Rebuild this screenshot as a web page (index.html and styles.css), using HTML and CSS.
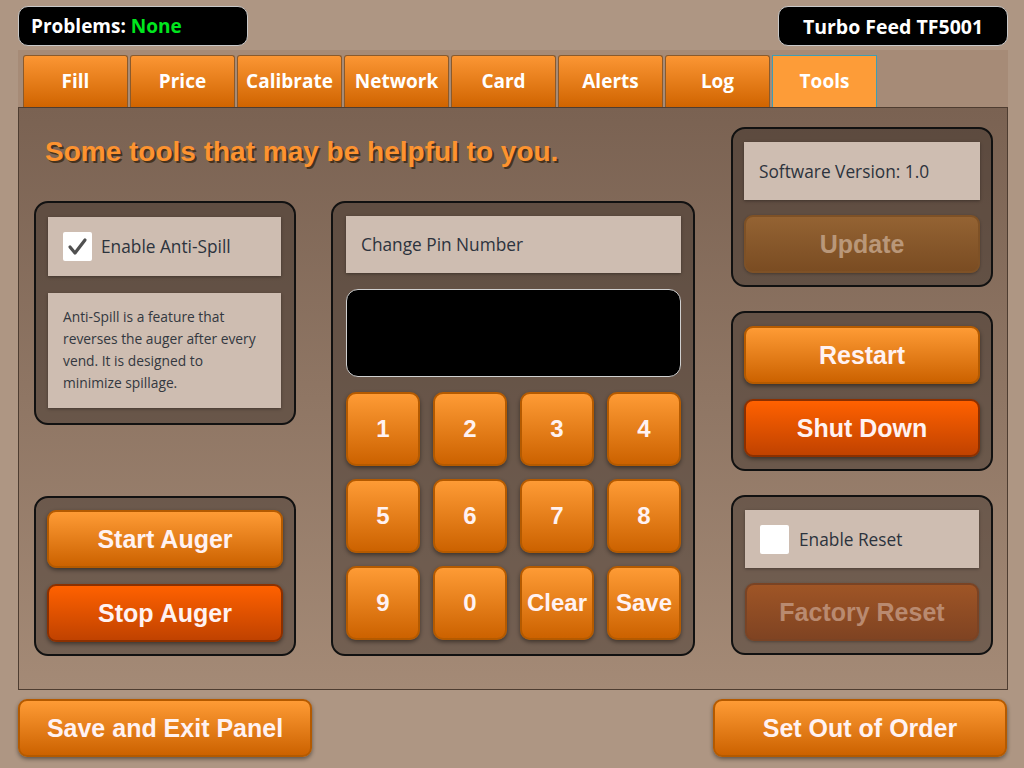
FILE: index.html
```html
<!DOCTYPE html>
<html>
<head>
<meta charset="utf-8">
<link rel="stylesheet" href="styles.css">
</head>
<body>
<div class="topbar">
  <div class="badge">Problems: <span class="ok">None</span></div>
  <div class="badge model">Turbo Feed TF5001</div>
</div>
<div class="tabstrip">
  <div class="tab">Fill</div>
  <div class="tab">Price</div>
  <div class="tab">Calibrate</div>
  <div class="tab">Network</div>
  <div class="tab">Card</div>
  <div class="tab">Alerts</div>
  <div class="tab">Log</div>
  <div class="tab active">Tools</div>
</div>
<div class="content">
  <div class="main">
    <h1 class="heading">Some tools that may be helpful to you.</h1>
    <div class="cols">
      <div class="leftcol">
        <div class="panel antispill">
          <div class="label check-row">
            <span class="checkbox"><svg width="29" height="29" viewBox="0 0 29 29"><path d="M7 15 L12 21 L22 8" fill="none" stroke="#505050" stroke-width="3.2" stroke-linecap="round" stroke-linejoin="round"/></svg></span>
            <span>Enable Anti-Spill</span>
          </div>
          <div class="label desc">Anti-Spill is a feature that reverses the auger after every vend. It is designed to minimize spillage.</div>
        </div>
        <div class="panel btnpanel">
          <div class="btn">Start Auger</div>
          <div class="btn red">Stop Auger</div>
        </div>
      </div>
      <div class="panel pinpanel">
        <div class="label pinlabel">Change Pin Number</div>
        <div class="display"></div>
        <div class="keypad">
          <div class="btn key">1</div>
          <div class="btn key">2</div>
          <div class="btn key">3</div>
          <div class="btn key">4</div>
          <div class="btn key">5</div>
          <div class="btn key">6</div>
          <div class="btn key">7</div>
          <div class="btn key">8</div>
          <div class="btn key">9</div>
          <div class="btn key">0</div>
          <div class="btn key">Clear</div>
          <div class="btn key">Save</div>
        </div>
      </div>
    </div>
  </div>
  <div class="rightcol">
    <div class="panel btnpanel rpanel">
      <div class="label rlabel">Software Version: 1.0</div>
      <div class="btn disabled">Update</div>
    </div>
    <div class="panel btnpanel rpanel">
      <div class="btn">Restart</div>
      <div class="btn red">Shut Down</div>
    </div>
    <div class="panel btnpanel rpanel reset">
      <div class="label check-row rlabel">
        <span class="checkbox"></span>
        <span>Enable Reset</span>
      </div>
      <div class="btn disabled-red">Factory Reset</div>
    </div>
  </div>
</div>
<div class="bottombar">
  <div class="btn wide">Save and Exit Panel</div>
  <div class="btn wide">Set Out of Order</div>
</div>
</body>
</html>
```
FILE: styles.css
```css
* { box-sizing: border-box; }
html, body { margin: 0; padding: 0; }
body {
  width: 1024px;
  height: 768px;
  background: #ae9683;
  font-family: "Open Sans", "Noto Sans", sans-serif;
  overflow: hidden;
}
.topbar {
  display: flex;
  justify-content: space-between;
  padding: 6px 16px 0 18px;
}
.badge {
  height: 40px;
  width: 230px;
  background: #000;
  border: 1px solid #c8c8c8;
  border-radius: 10px;
  color: #fff;
  font-weight: 700;
  font-size: 19px;
  line-height: 39px;
  padding-left: 12px;
}
.badge .ok { color: #00e61e; }
.badge.model { padding-left: 0; text-align: center; font-size: 19.5px; }

.tabstrip {
  margin: 4px 16px 0 18px;
  height: 57px;
  background: #a68b77;
  padding: 5px 0 0 5px;
  display: flex;
  gap: 2px;
}
.tab {
  width: 105px;
  height: 52px;
  border: 1px solid #8a5a2c;
  border-bottom: none;
  border-radius: 3px 3px 0 0;
  background: linear-gradient(#fb9634, #d06400);
  color: #fff;
  font-weight: 700;
  font-size: 19px;
  padding-bottom: 2px;
  display: flex;
  align-items: center;
  justify-content: center;
}
.tab.active {
  background: #fd9c38;
  border: 1px solid #3f9db3;
  border-bottom: none;
  border-radius: 0;
}

.content {
  margin: 0 16px 0 18px;
  height: 583px;
  border: 1px solid #4e3d31;
  background: linear-gradient(#7a6252, #a48a76);
  display: flex;
  padding: 19px 14px 0 15px;
}
.main { width: 665px; flex: none; }
.heading {
  margin: 0;
  height: 74px;
  padding: 9px 0 0 11px;
  font-family: "Liberation Sans", Arial, sans-serif;
  font-size: 28px;
  font-weight: 700;
  color: #fd9330;
  text-shadow: 2px 2px 0 #45331f;
}
.cols { display: flex; gap: 35px; }
.leftcol {
  width: 262px;
  display: flex;
  flex-direction: column;
  gap: 71px;
}
.panel {
  border: 2px solid #111;
  border-radius: 14px;
  background: rgba(50, 40, 35, 0.42);
}
.label {
  background: #cebdb1;
  color: #2c333d;
  box-shadow: 0 1px 3px rgba(0,0,0,0.35);
  font-size: 17.3px;
}
.antispill {
  height: 224px;
  padding: 14px 13px 0 12px;
}
.check-row {
  height: 59px;
  display: flex;
  align-items: center;
  padding-left: 15px;
  gap: 9px;
}
.checkbox {
  width: 29px;
  height: 29px;
  background: #fff;
  border-radius: 2px;
  display: block;
}
.checkbox svg { display: block; }
.desc {
  margin-top: 17px;
  height: 115px;
  font-size: 13.8px;
  line-height: 22px;
  padding: 13px 20px 0 15px;
  color: #333840;
}
.btnpanel {
  height: 160px;
  padding: 12px 11px 0 11px;
  display: flex;
  flex-direction: column;
  gap: 16px;
}
.btn {
  height: 58px;
  border: 2px solid #b45a00;
  border-radius: 9px;
  background: linear-gradient(#fe9b35, #cc6200);
  box-shadow: 0 2px 4px rgba(0,0,0,0.45);
  color: #fff2f2;
  font-family: "Liberation Sans", Arial, sans-serif;
  font-weight: 700;
  font-size: 25px;
  display: flex;
  align-items: center;
  justify-content: center;
}
.btn.red {
  border-color: #8c3000;
  background: linear-gradient(#ff6100, #c04200);
}
.btn.disabled {
  border-color: #7e5126;
  background: linear-gradient(#946333, #7a4c22);
  color: #b99779;
  box-shadow: 0 1px 3px rgba(0,0,0,0.3);
}
.btn.disabled-red {
  border-color: #7a4324;
  background: linear-gradient(#9f5526, #7f4322);
  color: #b98a70;
  box-shadow: 0 1px 3px rgba(0,0,0,0.3);
}

.pinpanel {
  width: 364px;
  height: 455px;
  padding: 13px 12px 0 13px;
}
.pinlabel {
  height: 57px;
  display: flex;
  align-items: center;
  padding-left: 15px;
}
.display {
  margin-top: 16px;
  height: 88px;
  background: #000;
  border: 1px solid #d0d0d0;
  border-radius: 12px;
}
.keypad {
  margin-top: 15px;
  display: grid;
  grid-template-columns: repeat(4, 74px);
  grid-auto-rows: 74px;
  column-gap: 13px;
  row-gap: 13px;
}
.key {
  height: auto;
  font-size: 24px;
  border-radius: 10px;
}

.rightcol {
  width: 262px;
  flex: none;
  margin-left: 32px;
  display: flex;
  flex-direction: column;
  gap: 24px;
}
.rpanel { padding-top: 13px; gap: 15px; }
.rlabel {
  height: 58px;
  display: flex;
  align-items: center;
  padding-left: 15px;
}
.reset .rlabel { margin: 0 1px; padding-left: 15px; gap: 10px; }
.reset { padding-top: 13px; }
.reset .btn { margin: 0 1px; }

.bottombar {
  display: flex;
  justify-content: space-between;
  padding: 9px 17px 0 18px;
}
.btn.wide { width: 294px; }
```
